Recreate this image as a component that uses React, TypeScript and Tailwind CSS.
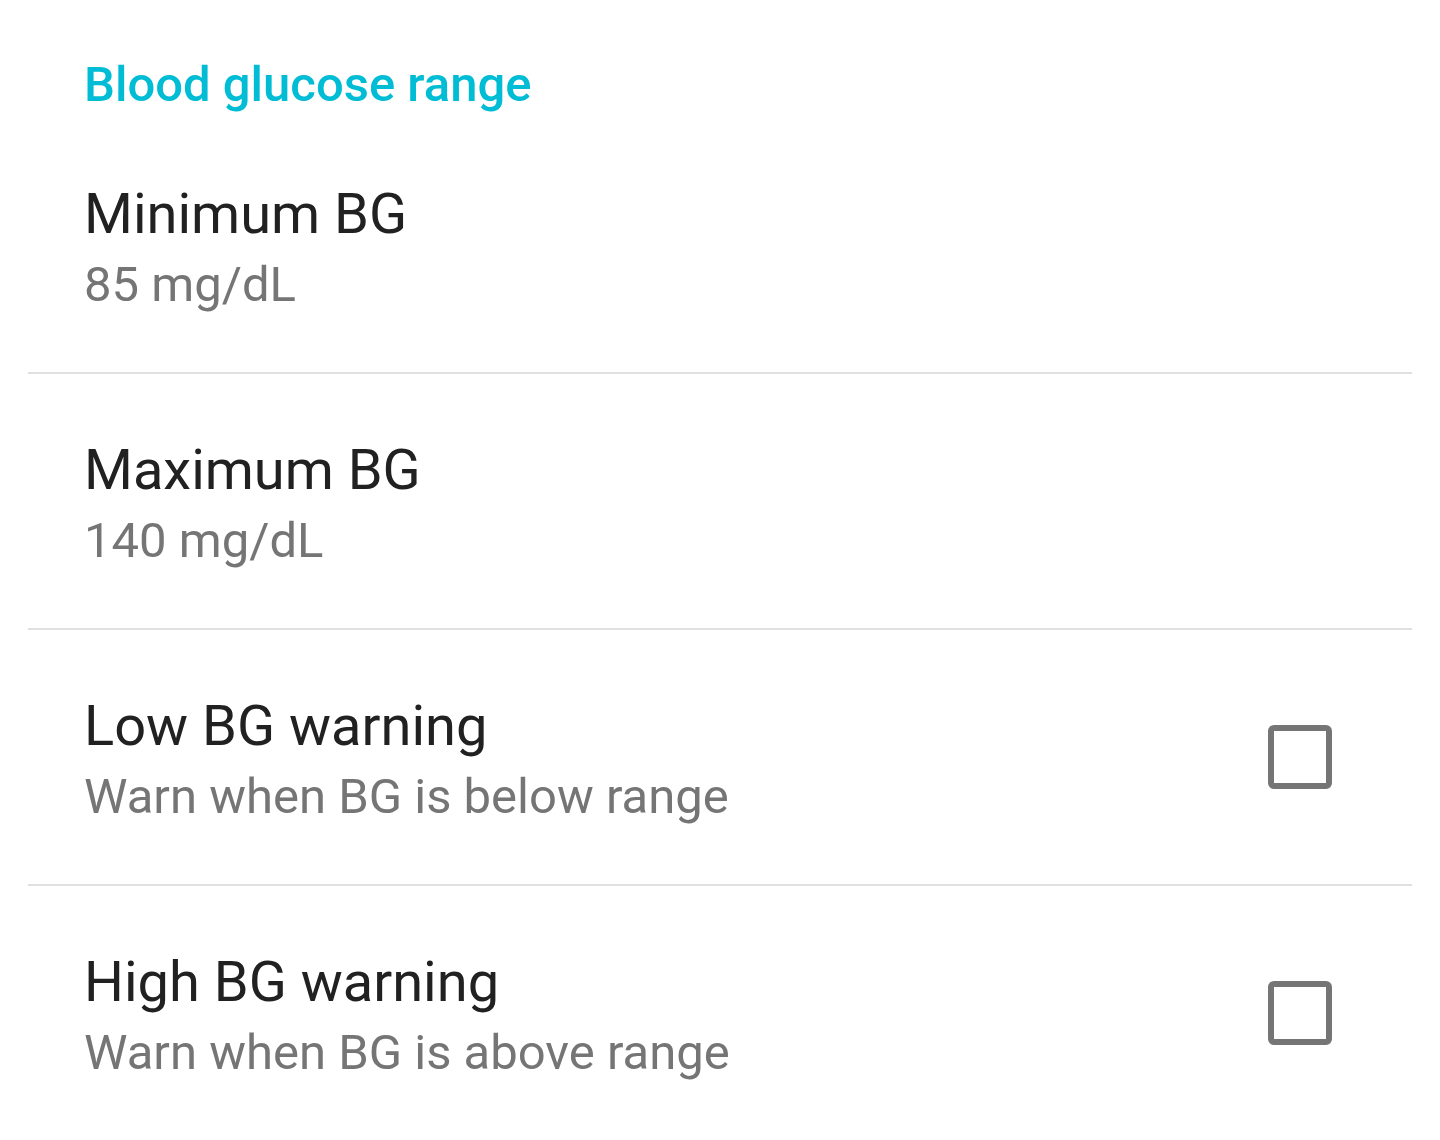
const rows = [
  { title: "Minimum BG", summary: "85 mg/dL", check: false },
  { title: "Maximum BG", summary: "140 mg/dL", check: false },
  { title: "Low BG warning", summary: "Warn when BG is below range", check: true },
  { title: "High BG warning", summary: "Warn when BG is above range", check: true },
];

const Checkbox = () => (
  <div className="w-[64px] h-[64px] rounded-[6px] border-[6px] border-[#757575]" />
);

const App = () => {
  return (
    <div className="w-[1440px] h-[1140px] bg-white font-['Roboto',sans-serif] overflow-hidden">
      <div className="pl-[84px] pt-[55px] h-[118px]">
        <h1 className="text-[49px] leading-[60px] font-medium text-[#00bcd4]">
          Blood glucose range
        </h1>
      </div>
      {rows.map((r, i) => (
        <div key={r.title}>
          {i > 0 && <div className="mx-[28px] h-[2px] bg-[#e0e0e0]" />}
          <div className="h-[254px] flex items-center pl-[84px] pr-[108px]">
            <div className="flex-1 self-start pt-[64px]">
              <div className="text-[56px] leading-[64px] text-[#212121]">{r.title}</div>
              <div className="mt-[9px] text-[49px] leading-[60px] text-[#757575]">{r.summary}</div>
            </div>
            {r.check && <Checkbox />}
          </div>
        </div>
      ))}
    </div>
  );
};

export default App;
